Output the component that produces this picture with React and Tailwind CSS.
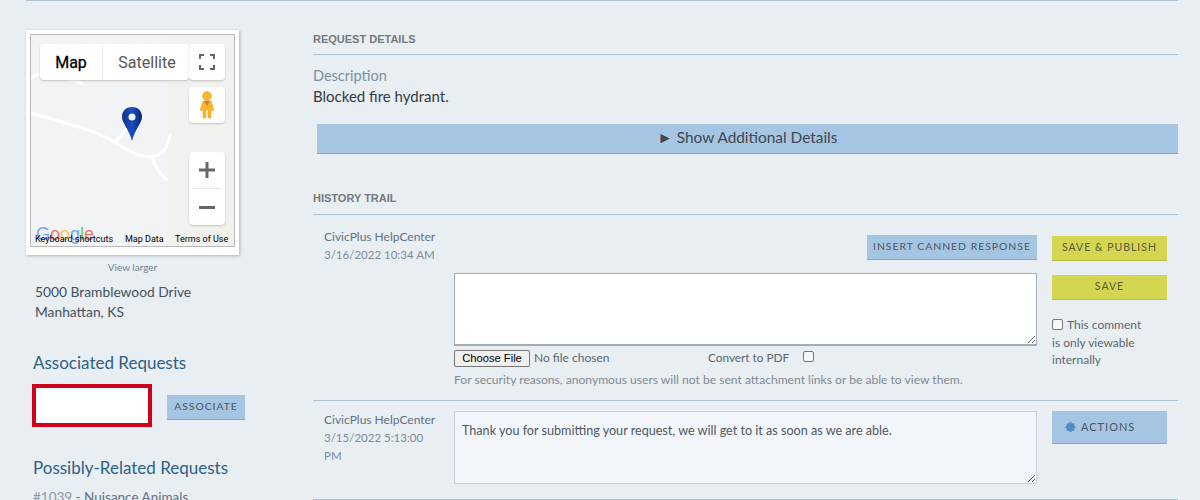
import React from "react";

const MapBox = () => {
  return (
    <div className="w-[213px] h-[225px] bg-white pt-[4px] px-[4px] shadow-[1px_1px_3px_rgba(0,0,0,0.25)]">
      <div className="relative w-[205px] h-[213px] border border-[#b9b9b9] bg-[#f1f3f5] overflow-hidden font-['Roboto',sans-serif]">
        <div className="absolute right-0 top-0 bottom-0 w-[67px] bg-[#f1f1f0]"></div>
        <svg className="absolute left-0 top-0" width="203" height="211" viewBox="0 0 203 211" fill="none" stroke="#ffffff" strokeWidth="3" strokeLinecap="round">
          <path d="M0 43 Q6 39 14 39 Q26 39 51 48" />
          <path d="M0 78 C40 90 65 95 85 108 C100 118 115 124 125 121 C135 117 137 108 139 100" />
          <path d="M84 108 L97 92" />
          <path d="M121 122 C124 132 130 140 136 145" />
        </svg>
        <div className="absolute left-[9px] top-[9px] flex h-[36px] bg-white rounded-sm shadow-[0_1px_2px_rgba(0,0,0,0.2)] text-[16px]">
          <div className="w-[63px] pt-px flex items-center justify-center text-black border-r border-[#eeeeee] [-webkit-text-stroke:0.3px_black]">Map</div>
          <div className="w-[86px] pt-px pl-[2px] flex items-center justify-center text-[#565656]">Satellite</div>
        </div>
        <div className="absolute left-[158px] top-[9px] w-[36px] h-[36px] bg-white rounded-sm shadow-[0_1px_2px_rgba(0,0,0,0.2)] flex items-center justify-center">
          <svg width="16" height="16" viewBox="0 0 16 16" fill="none" stroke="#666666" strokeWidth="2">
            <path d="M1 5V1H5M11 1H15V5M15 11V15H11M5 15H1V11" />
          </svg>
        </div>
        <div className="absolute left-[158px] top-[52px] w-[36px] h-[36px] bg-white rounded-sm shadow-[0_1px_2px_rgba(0,0,0,0.2)] flex items-center justify-center">
          <svg width="16" height="28" viewBox="0 0 16 28" fill="#f9b52b" stroke="#e8a020" strokeWidth="0.5">
            <circle cx="8" cy="5" r="4.5" />
            <path d="M4 10 H12 L15 19 L13 20 L12 17 V27 H9 V19 H7 V27 H4 V17 L3 20 L1 19 Z" />
            <path d="M5 10 L8 15 L11 10 Z" fill="#e0762b" stroke="none" />
          </svg>
        </div>
        <div className="absolute left-[158px] top-[117px] w-[36px] h-[73px] bg-white rounded-sm shadow-[0_1px_2px_rgba(0,0,0,0.2)] flex flex-col items-center">
          <svg width="16" height="16" viewBox="0 0 16 16" fill="#666666" className="mt-[10px]">
            <path d="M6.5 0H9.5V6.5H16V9.5H9.5V16H6.5V9.5H0V6.5H6.5Z" />
          </svg>
          <div className="w-[28px] h-px bg-[#e6e6e6] mt-[10px]"></div>
          <svg width="16" height="4" viewBox="0 0 16 4" fill="#666666" className="mt-[17px]">
            <rect width="16" height="3" />
          </svg>
        </div>
        <svg className="absolute left-[90px] top-[71px]" width="22" height="36" viewBox="0 0 22 36">
          <defs>
            <linearGradient id="pin" x1="0" y1="0" x2="1" y2="0">
              <stop offset="0" stopColor="#10308c" />
              <stop offset="0.5" stopColor="#1c4fc4" />
              <stop offset="1" stopColor="#0e2270" />
            </linearGradient>
          </defs>
          <path d="M11 1 C5 1 1 5 1 11 C1 17 8 23 11 35 C14 23 21 17 21 11 C21 5 17 1 11 1Z" fill="url(#pin)" />
          <circle cx="11" cy="11" r="3.5" fill="#f0f2f8" />
        </svg>
        <div className="absolute left-[5px] bottom-[1px] text-[18px] leading-[22px] font-['Liberation_Sans',sans-serif] opacity-70">
          <span className="text-[#4285f4]">G</span>
          <span className="text-[#ea4335]">o</span>
          <span className="text-[#fbbc05]">o</span>
          <span className="text-[#4285f4]">g</span>
          <span className="text-[#34a853]">l</span>
          <span className="text-[#ea4335]">e</span>
        </div>
        <div className="absolute left-0 right-0 bottom-0 h-[12px] flex items-center text-[9px] text-black whitespace-nowrap">
          <span className="ml-[4px]">Keyboard shortcuts</span>
          <span className="absolute left-[94px]">Map Data</span>
          <span className="absolute left-[144px]">Terms of Use</span>
        </div>
      </div>
    </div>
  );
};

const BlueButton = ({ children, className }) => {
  return (
    <button className={"bg-[#a6c5e3] border-b border-[#8aa5c5] text-[#4a5560] uppercase tracking-[1px] " + className}>
      {children}
    </button>
  );
};

const YellowButton = ({ children }) => {
  return (
    <button className="block w-[115px] h-[25px] bg-[#d4d652] border-b border-[#bcbe42] text-[#5a5a3c] text-[10.5px] uppercase tracking-[1px]">
      {children}
    </button>
  );
};

const Author = ({ date, className }) => {
  return (
    <div className={"leading-[18px] pl-[11px] " + className}>
      <div className="text-[12px] text-[#5f7186] whitespace-nowrap">CivicPlus HelpCenter</div>
      <div className="text-[11.5px] text-[#7b8c9b] w-[115px]">{date}</div>
    </div>
  );
};

const App = () => {
  return (
    <div className="w-[1200px] h-[500px] overflow-hidden bg-[#e9eef2] px-[26px] font-['Lato',sans-serif]">
      <div className="flex border-t border-[#aec2d8] pt-[29px] w-[1152px]">
        {/* map and sidebar */}
        <div className="w-[287px] shrink-0">
          <MapBox />
          <div className="text-[10px] text-[#6d8294] w-[213px] text-center mt-[6px] leading-[12px]">View larger</div>
          <div className="ml-[9px] mt-[9px] text-[13.8px] leading-[20px] text-[#45505c]">
            <div>5000 Bramblewood Drive</div>
            <div>Manhattan, KS</div>
          </div>
          <h2 className="ml-[7px] mt-[30px] text-[17px] leading-[22px] text-[#2b6288]">Associated Requests</h2>
          <div className="flex items-center ml-[6px] mt-[10px]">
            <div className="w-[120px] h-[43px] bg-white border-[4px] border-[#d0021b]"></div>
            <BlueButton className="ml-[15px] w-[78px] h-[25px] text-[10.3px] mt-[3px]">Associate</BlueButton>
          </div>
          <h2 className="ml-[7px] mt-[30px] text-[17px] leading-[22px] text-[#2b6288]">Possibly-Related Requests</h2>
          <div className="ml-[7px] mt-[10px] text-[13.5px] leading-[16px] text-[#5f7186] whitespace-nowrap">
            <span className="text-[#8a97a5]">#1039</span> - Nuisance Animals
          </div>
        </div>

        {/* request details */}
        <div className="flex-1 min-w-0">
          <h3 className="text-[11px] leading-[16px] font-bold font-['Liberation_Sans',sans-serif] text-[#76797c] border-b border-[#aec2d8] pt-px pb-[7px]">REQUEST DETAILS</h3>
          <div className="text-[14.5px] leading-[20px] text-[#7b8fa1] mt-[11px]">Description</div>
          <div className="text-[15px] leading-[20px] text-[#333a42]">Blocked fire hydrant.</div>
          <button className="block ml-[4px] mt-[18px] w-[861px] h-[30px] pb-[2px] bg-[#a6c5e3] border-b border-[#8aa5c5] text-[15.4px] text-[#3f4852]">
            ► Show Additional Details
          </button>
          <h3 className="mt-[36px] text-[11px] leading-[16px] font-bold font-['Liberation_Sans',sans-serif] text-[#76797c] border-b border-[#aec2d8] pb-[8px]">HISTORY TRAIL</h3>

          {/* new comment */}
          <div className="grid grid-cols-[141px_583px_130px] border-b border-[#aec2d8] pt-[12px] pb-[12px]">
            <Author date="3/16/2022 10:34 AM" className="mt-px" />
            <div className="w-[583px]">
              <div className="flex justify-end">
                <BlueButton className="block w-[170px] h-[25px] text-[10.4px] mt-[8px]">Insert Canned Response</BlueButton>
              </div>
              <textarea className="block w-[583px] h-[73px] mt-[13px] bg-white border border-[#a3adb8] border-b-2" readOnly></textarea>
              <div className="flex items-center text-[11.8px] h-[20px] mt-[2px] text-[#5b6670]">
                <span className="w-[76px] h-[17px] bg-[#efefef] border border-[#767676] rounded-[2px] text-[11.2px] leading-[15px] text-black text-center font-['Liberation_Sans',sans-serif]">Choose File</span>
                <span className="ml-[4px] w-[174px] text-[12px]">No file chosen</span>
                <span>Convert to PDF</span>
                <input type="checkbox" className="ml-[14px] mb-[3px] w-[11px] h-[11px] appearance-none bg-[#f4f6f8] border border-[#767676] rounded-[2px]" />
              </div>
              <div className="text-[12.1px] leading-[16px] text-[#7f8a94] mt-[4px] whitespace-nowrap">For security reasons, anonymous users will not be sent attachment links or be able to view them.</div>
            </div>
            <div className="ml-[15px] w-[115px]">
              <div className="mt-[9px]"><YellowButton>Save &amp; Publish</YellowButton></div>
              <div className="mt-[14px]"><YellowButton>Save</YellowButton></div>
              <div className="mt-[16px] text-[12px] leading-[17.5px] text-[#5b6670] w-[95px]">
                <input type="checkbox" className="mr-[4px] w-[11px] h-[11px] align-[-1px] appearance-none bg-[#f4f6f8] border border-[#767676] rounded-[2px]" />
                This comment is only viewable internally
              </div>
            </div>
          </div>

          {/* existing comment */}
          <div className="grid grid-cols-[141px_583px_130px] border-b border-[#aec2d8] pt-[10px] pb-[15px]">
            <Author date="3/15/2022 5:13:00 PM" />
            <textarea
              className="block w-[583px] h-[73px] bg-[#f2f6fa] border border-[#c9d1d9] px-[7px] py-[11px] text-[12.6px] leading-[16px] text-[#4d5862]"
              readOnly
              defaultValue="Thank you for submitting your request, we will get to it as soon as we are able."
            ></textarea>
            <div className="ml-[15px]">
              <BlueButton className="w-[115px] h-[33px] text-[11px] flex items-center pl-[13px]">
                <svg width="11" height="11" viewBox="0 0 24 24" fill="#4f8cc4" className="mr-[5px]">
                  <path d="M10 0h4l1 4 3-2 3 3-2 3 4 1v4l-4 1 2 3-3 3-3-2-1 4h-4l-1-4-3 2-3-3 2-3-4-1v-4l4-1-2-3 3-3 3 2z" />
                </svg>
                Actions
              </BlueButton>
            </div>
          </div>
        </div>
      </div>
    </div>
  );
};

export default App;
